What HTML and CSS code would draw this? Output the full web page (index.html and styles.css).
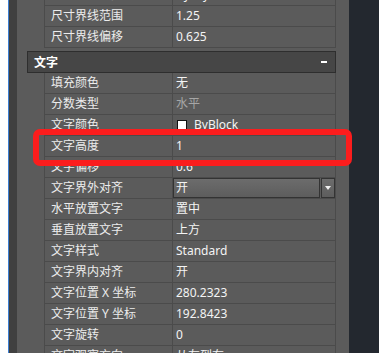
FILE: index.html
```html
<!DOCTYPE html>
<html lang="zh-CN">
<head>
    <meta charset="UTF-8">
    <meta name="viewport" content="width=device-width, initial-scale=1.0">
    <title>特性 - 标注样式</title>
    <link rel="stylesheet" href="styles.css">
</head>
<body>

    <div class="screen">
        <div class="edge"></div>
        <div class="dock"></div>

        <div class="palette">
            <div class="group group-first">
                <div class="row"><div class="label">尺寸界线线宽</div><div class="value">ByLayer</div></div>
                <div class="row"><div class="label">尺寸界线范围</div><div class="value">1.25</div></div>
                <div class="row"><div class="label">尺寸界线偏移</div><div class="value">0.625</div></div>
            </div>

            <div class="category">
                <span>文字</span>
                <span class="toggle"></span>
            </div>

            <div class="group">
                <div class="row"><div class="label">填充颜色</div><div class="value">无</div></div>
                <div class="row"><div class="label">分数类型</div><div class="value disabled">水平</div></div>
                <div class="row"><div class="label">文字颜色</div><div class="value"><span class="swatch"></span>ByBlock</div></div>
                <div class="row"><div class="label">文字高度</div><div class="value">1</div></div>
                <div class="row"><div class="label">文字偏移</div><div class="value">0.6</div></div>
                <div class="row">
                    <div class="label">文字界外对齐</div>
                    <div class="value value-select">
                        <div class="select">开</div>
                        <div class="select-btn"><span class="arrow"></span></div>
                    </div>
                </div>
                <div class="row"><div class="label">水平放置文字</div><div class="value">置中</div></div>
                <div class="row"><div class="label">垂直放置文字</div><div class="value">上方</div></div>
                <div class="row"><div class="label">文字样式</div><div class="value">Standard</div></div>
                <div class="row"><div class="label">文字界内对齐</div><div class="value">开</div></div>
                <div class="row"><div class="label">文字位置 X 坐标</div><div class="value">280.2323</div></div>
                <div class="row"><div class="label">文字位置 Y 坐标</div><div class="value">192.8423</div></div>
                <div class="row"><div class="label">文字旋转</div><div class="value">0</div></div>
                <div class="row"><div class="label">文字观察方向</div><div class="value">从左到右</div></div>
            </div>
        </div>

        <div class="desk"></div>

        <!-- red marker drawn over the palette -->
        <div class="highlight"></div>
    </div>

</body>
</html>
```

FILE: styles.css
```css
body {
    margin: 0;
    padding: 0;
    background: #23282f;
    font-family: 'Noto Sans', 'Noto Sans CJK SC', sans-serif;
    font-size: 12px;
    color: #f0f0f0;
    overflow: hidden;
}

.screen {
    position: relative;
    display: flex;
    width: 379px;
    height: 353px;
    overflow: hidden;
}

.edge {
    width: 8px;
    background: #ffffff;
    border-right: 1px solid #3d7fd2;
}

.dock {
    width: 8px;
    background: #404040;
}

.palette {
    width: 332px;
    padding: 0 13px 0 10px;
    box-sizing: border-box;
    background: #5b5b5b;
}

.desk {
    flex: 1;
    background: #23282f;
}

.group {
    margin-left: 17px;
}

.group-first {
    margin-top: -15px;
    margin-bottom: 3px;
}

.row {
    display: grid;
    grid-template-columns: 128px 1fr;
    height: 20px;
    border-left: 1px solid #4b4b4b;
    border-right: 1px solid #4b4b4b;
    border-bottom: 1px solid #4b4b4b;
    line-height: 20px;
    white-space: nowrap;
}

.label {
    padding-left: 6px;
    border-right: 1px solid #4b4b4b;
    color: #ececec;
    overflow: hidden;
}

.value {
    padding-left: 3px;
    color: #f4f4f4;
    display: flex;
    align-items: center;
    overflow: hidden;
}

.value.disabled {
    color: #a6a6a6;
}

.swatch {
    width: 8px;
    height: 8px;
    margin: 0 7px 0 1px;
    background: #ffffff;
    border: 1px solid #111;
}

.category {
    display: flex;
    justify-content: space-between;
    align-items: center;
    height: 20px;
    padding: 0 8px 0 6px;
    background: #464646;
    border: 1px solid #2e2e2e;
    font-weight: bold;
    color: #ffffff;
}

.toggle {
    width: 6px;
    height: 2px;
    background: #ffffff;
}

.value-select {
    padding-left: 0;
}

.select {
    flex: 1;
    height: 18px;
    line-height: 18px;
    padding-left: 2px;
    border: 1px solid #333;
    background: linear-gradient(#6c6c6c, #5d5d5d);
}

.select-btn {
    width: 12px;
    height: 18px;
    margin-left: 1px;
    border: 1px solid #333;
    background: linear-gradient(#6c6c6c, #5d5d5d);
    display: flex;
    align-items: center;
    justify-content: center;
}

.arrow {
    width: 0;
    height: 0;
    border-left: 3px solid transparent;
    border-right: 3px solid transparent;
    border-top: 4px solid #f0f0f0;
}

.highlight {
    position: absolute;
    left: 33px;
    top: 129px;
    width: 307px;
    height: 25px;
    border: 6px solid #fb1d1d;
    border-radius: 7px;
}
```
